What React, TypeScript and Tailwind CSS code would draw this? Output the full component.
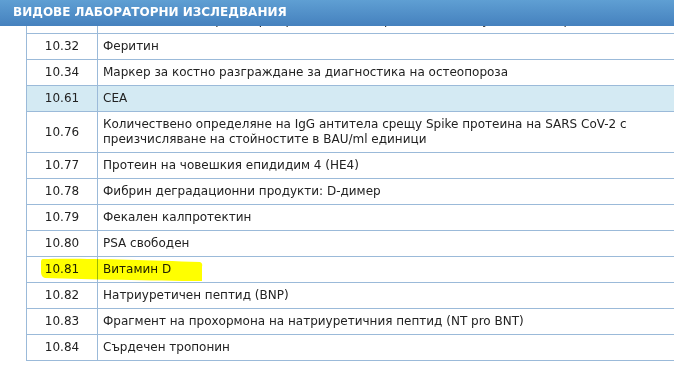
const rows: { code: string; name: string; active?: boolean }[] = [
  { code: "10.32", name: "Феритин" },
  { code: "10.34", name: "Маркер за костно разграждане за диагностика на остеопороза" },
  { code: "10.61", name: "CEA", active: true },
  {
    code: "10.76",
    name: "Количествено определяне на IgG антитела срещу Spike протеина на SARS CoV-2 с преизчисляване на стойностите в BAU/ml единици",
  },
  { code: "10.77", name: "Протеин на човешкия епидидим 4 (HE4)" },
  { code: "10.78", name: "Фибрин деградационни продукти: D-димер" },
  { code: "10.79", name: "Фекален калпротектин" },
  { code: "10.80", name: "PSA свободен" },
  { code: "10.81", name: "Витамин D" },
  { code: "10.82", name: "Натриуретичен пептид (BNP)" },
  { code: "10.83", name: "Фрагмент на прохормона на натриуретичния пептид (NT pro BNT)" },
  { code: "10.84", name: "Сърдечен тропонин" },
];

export default function App() {
  return (
    <div className="relative h-[384px] w-[674px] overflow-hidden bg-white font-['DejaVu_Sans',Verdana,sans-serif] text-[#222]">
      <div className="h-[26px] bg-gradient-to-b from-[#5f9fd3] to-[#4581be] pl-[13px] text-[12px] font-bold leading-[24px] text-white">
        ВИДОВЕ ЛАБОРАТОРНИ ИЗСЛЕДВАНИЯ
      </div>

      <div className="ml-[26px] w-[700px] border-l border-[#9bbad9] text-[12px] leading-[15px]">
        {/* row scrolled up under the header, only descenders show */}
        <div className="flex h-[8px] overflow-hidden border-b border-[#9bbad9]">
          <div className="w-[71px] shrink-0 border-r border-[#9bbad9]" />
          <div className="-mt-[18px] w-[560px] shrink-0 py-[5px] pl-[5px]">
            Изследване на хормон при бременност по преценка на лекуващия лекар
          </div>
        </div>
        {rows.map((r) => (
          <div
            key={r.code}
            className={`flex border-b border-[#9bbad9] ${r.active ? "bg-[#d4eaf3]" : ""}`}
          >
            <div className="flex w-[71px] shrink-0 items-center justify-center border-r border-[#9bbad9] py-[5px]">
              {r.code}
            </div>
            <div className="w-[560px] py-[5px] pl-[5px]">{r.name}</div>
          </div>
        ))}
      </div>

      {/* marker stroke over "Витамин D" */}
      <svg
        className="pointer-events-none absolute left-[40px] top-[257px] mix-blend-multiply"
        width="166"
        height="28"
        viewBox="0 0 166 28"
      >
        <path
          d="M3 2 C40 1 100 3 160 5 Q163 6 162 10 L162 24 C110 24 50 22 5 21 Q1 20 1 15 L1 5 Q1 2 3 2 Z"
          fill="#ffff00"
        />
      </svg>
    </div>
  );
}
